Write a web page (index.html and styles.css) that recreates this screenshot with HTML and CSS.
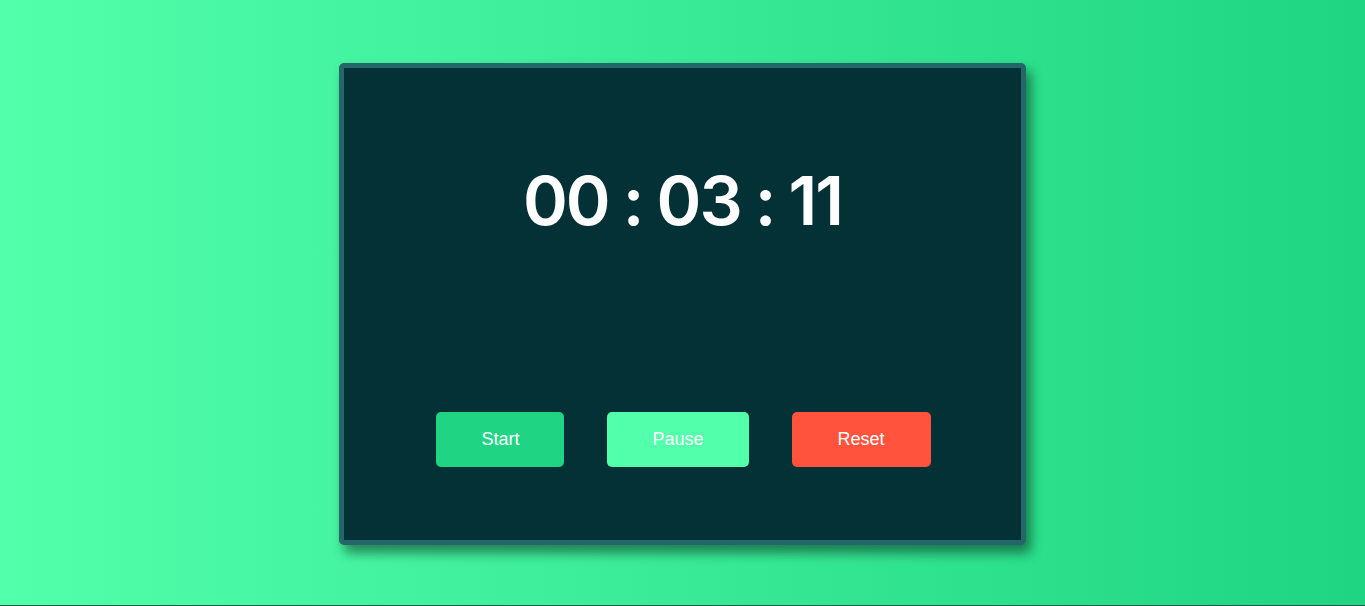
FILE: index.html
```html
<!DOCTYPE html>
<html lang="en">
<head>
<meta charset="utf-8">
<title>Stopwatch</title>
<link rel="stylesheet" href="styles.css">
</head>
<body>
<main class="page">
  <section class="watch">
    <div class="time">00 : 03 : 11</div>
    <div class="controls">
      <button class="btn btn-start">Start</button>
      <button class="btn btn-pause">Pause</button>
      <button class="btn btn-reset">Reset</button>
    </div>
  </section>
</main>
</body>
</html>
```
FILE: styles.css
```css
* { box-sizing: border-box; }
html, body { margin: 0; padding: 0; }
body {
  background: #1fd583;
}
.page {
  height: 606px;
  background: linear-gradient(to right, #52ffab, #1fd581);
  border-bottom: 1px solid #0f5a55;
  display: flex;
  justify-content: center;
  align-items: flex-start;
  padding-top: 63px;
}
.watch {
  width: 687px;
  height: 482px;
  background: #033136;
  border: 5px solid #24666a;
  border-radius: 5px;
  box-shadow: 5px 8px 12px rgba(0, 0, 0, 0.45);
  display: flex;
  flex-direction: column;
  align-items: center;
  padding-top: 96px;
}
.time {
  font-family: "Inter", "DejaVu Sans", sans-serif;
  font-weight: 600;
  font-size: 68px;
  line-height: 72px;
  color: #ffffff;
  letter-spacing: -2px;
  word-spacing: -1px;
}
.controls {
  display: flex;
  gap: 43px;
  margin-top: 176px;
  padding-left: 2px;
}
.btn {
  font-family: "Liberation Sans", Arial, sans-serif;
  font-size: 18px;
  color: #ffffff;
  border: none;
  border-radius: 5px;
  height: 55px;
  padding: 0 45px;
  cursor: pointer;
}
.btn-start { background: #1fd584; }
.btn-pause { background: #52ffab; }
.btn-reset { background: #ff533d; padding: 0 46px; }
```
